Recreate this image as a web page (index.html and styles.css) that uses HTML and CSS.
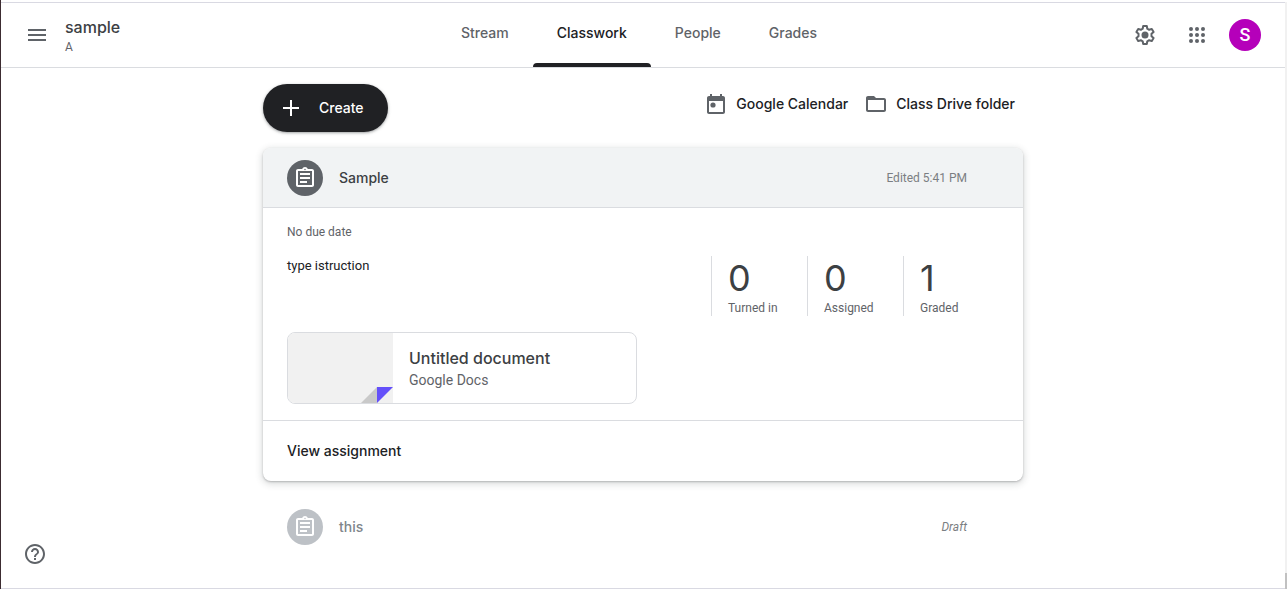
FILE: index.html
```
<!DOCTYPE html>
<html lang="en">
<head>
<meta charset="utf-8">
<meta name="viewport" content="width=device-width, initial-scale=1">
<title>Classwork for sample A</title>
<link rel="stylesheet" href="styles.css">
</head>
<body>
<svg class="defs" aria-hidden="true">
  <symbol id="assignment" viewBox="0 0 24 24">
    <path d="M7 15h7v2H7zm0-4h10v2H7zm0-4h10v2H7zm12-4h-4.180C14.400 1.840 13.300 1 12 1c-1.300 0-2.400.84-2.820 2H5c-1.100 0-2 .9-2 2v14c0 1.100.9 2 2 2h14c1.100 0 2-.9 2-2V5c0-1.100-.9-2-2-2zm-7-.25c.41 0 .75.34.75.75s-.34.75-.75.75-.75-.34-.75-.75.34-.75.75-.75zM19 19H5V5h14v14z"/>
  </symbol>
</svg>
<div class="window">
  <div class="page">
    <header class="topbar">
      <div class="brand">
        <button class="icon-button" type="button" aria-label="Main menu">
          <svg class="icon" viewBox="0 0 24 24"><path d="M3 18h18v-2H3v2zm0-5h18v-2H3v2zm0-7v2h18V6H3z"/></svg>
        </button>
        <a class="class-link" href="#">
          <span class="class-name">sample</span>
          <span class="class-section">A</span>
        </a>
      </div>
      <nav class="tabs" aria-label="Class">
        <a class="tab" href="#">Stream</a>
        <a class="tab tab-active" href="#" aria-current="page">Classwork</a>
        <a class="tab" href="#">People</a>
        <a class="tab" href="#">Grades</a>
      </nav>
      <div class="actions">
        <button class="icon-button" type="button" aria-label="Class settings">
          <svg class="icon" viewBox="0 0 24 24">
            <path fill="none" stroke="currentColor" stroke-width="2" stroke-linejoin="round" d="M10.200 3h3.600l.5 2.700 1.900 1.100 2.600-.9 1.800 3.100-2.100 1.800v2.400l2.100 1.800-1.800 3.100-2.600-.9-1.900 1.100-.5 2.700h-3.600l-.5-2.700-1.900-1.100-2.600.9L3.400 15l2.100-1.800v-2.400L3.400 9l1.800-3.100 2.600.9 1.900-1.100z"/>
            <circle cx="12" cy="12" r="3.500"/>
          </svg>
        </button>
        <button class="icon-button" type="button" aria-label="Google apps">
          <svg class="icon" viewBox="0 0 24 24">
            <circle cx="6" cy="6" r="2"/><circle cx="12" cy="6" r="2"/><circle cx="18" cy="6" r="2"/>
            <circle cx="6" cy="12" r="2"/><circle cx="12" cy="12" r="2"/><circle cx="18" cy="12" r="2"/>
            <circle cx="6" cy="18" r="2"/><circle cx="12" cy="18" r="2"/><circle cx="18" cy="18" r="2"/>
          </svg>
        </button>
        <button class="avatar" type="button" aria-label="Google Account: S">S</button>
      </div>
    </header>

    <main class="content">
      <div class="toolbar">
        <button class="create" type="button">
          <svg class="icon" viewBox="0 0 24 24"><path d="M20 13h-7v7h-2v-7H4v-2h7V4h2v7h7v2z"/></svg>
          Create
        </button>
        <div class="links">
          <a class="link" href="#">
            <svg class="icon link-icon" viewBox="0 0 24 24"><path d="M19 4h-1V2h-2v2H8V2H6v2H5c-1.110 0-1.990.9-1.990 2L3 20c0 1.100.89 2 2 2h14c1.100 0 2-.9 2-2V6c0-1.100-.9-2-2-2zm0 16H5V9h14v11z"/><circle cx="9" cy="13" r="2.600"/></svg>
            Google Calendar
          </a>
          <a class="link" href="#">
            <svg class="icon link-icon" viewBox="0 0 24 24"><path d="M20 6h-8l-2-2H4c-1.100 0-1.990.9-1.990 2L2 18c0 1.100.9 2 2 2h16c1.100 0 2-.9 2-2V8c0-1.100-.9-2-2-2zm0 12H4V8h16v10z"/></svg>
            Class Drive folder
          </a>
        </div>
      </div>

      <article class="card">
        <header class="row card-head">
          <span class="badge"><svg class="icon"><use href="#assignment"/></svg></span>
          <h2 class="row-title">Sample</h2>
          <span class="row-meta">Edited 5:41 PM</span>
        </header>
        <div class="card-body">
          <p class="due">No due date</p>
          <div class="summary">
            <p class="instruction">type istruction</p>
            <div class="stats">
              <a class="stat" href="#"><span class="stat-number">0</span><span class="stat-label">Turned in</span></a>
              <a class="stat" href="#"><span class="stat-number">0</span><span class="stat-label">Assigned</span></a>
              <a class="stat" href="#"><span class="stat-number">1</span><span class="stat-label">Graded</span></a>
            </div>
          </div>
          <a class="attachment" href="#">
            <span class="thumb">
              <svg class="fold" viewBox="0 0 32 16"><path fill="#c9c9c9" d="M0 16L16 0v16z"/><path fill="#6450fa" d="M16 0h16L16 16z"/></svg>
            </span>
            <span class="attachment-text">
              <span class="attachment-title">Untitled document</span>
              <span class="attachment-type">Google Docs</span>
            </span>
          </a>
        </div>
        <footer class="card-foot"><a class="view-link" href="#">View assignment</a></footer>
      </article>

      <div class="row draft">
        <span class="badge badge-muted"><svg class="icon"><use href="#assignment"/></svg></span>
        <h2 class="row-title">this</h2>
        <span class="row-meta">Draft</span>
      </div>
    </main>

    <button class="help" type="button" aria-label="Help">
      <svg class="icon" viewBox="0 0 24 24"><path d="M11 18h2v-2h-2v2zm1-16C6.480 2 2 6.480 2 12s4.480 10 10 10 10-4.480 10-10S17.520 2 12 2zm0 18c-4.410 0-8-3.590-8-8s3.590-8 8-8 8 3.590 8 8-3.590 8-8 8zm0-14c-2.210 0-4 1.790-4 4h2c0-1.100.9-2 2-2s2 .9 2 2c0 2-3 1.750-3 5h2c0-2.250 3-2.500 3-5 0-2.210-1.790-4-4-4z"/></svg>
    </button>
  </div>
  <div class="scroll-track"><div class="scroll-thumb"></div></div>
</div>
</body>
</html>
```
FILE: styles.css
```
:root {
  --heading: Inter, "Open Sans", sans-serif;
  --body: Roboto, "Liberation Sans", sans-serif;
  --ink: #202124;
  --dark: #3c4043;
  --grey: #5f6368;
  --line: #dadce0;
}

* { box-sizing: border-box; }

body {
  margin: 0;
  font-family: var(--body);
  font-size: 13px;
  line-height: 20px;
  color: var(--ink);
  background: #fff;
}

h2, p { margin: 0; font-weight: 400; }
a { color: inherit; text-decoration: none; }
button { border: 0; padding: 0; background: none; color: inherit; cursor: pointer; }

.defs { display: none; }
.icon { display: block; flex: none; width: 24px; height: 24px; fill: currentColor; }

.window {
  display: flex;
  min-height: 100vh;
  padding-top: 2px;
  border-left: 1px solid #3c2c31;
}

.page {
  position: relative;
  flex: 1;
  min-width: 0;
  border-top: 1px solid #d9d9e2;
  border-bottom: 1px solid #d9d9e2;
}

.scroll-track {
  display: flex;
  flex-direction: column;
  justify-content: flex-end;
  width: 2px;
  background: #f1f1f1;
}
.scroll-thumb { height: 16px; background: #c1c1c1; }

.topbar {
  display: grid;
  grid-template-columns: 1fr auto 1fr;
  height: 65px;
  padding: 0 24px 0 16px;
  border-bottom: 1px solid var(--line);
  color: var(--grey);
}

.brand, .actions { display: flex; align-items: center; }
.brand { gap: 8px; }
.actions { justify-content: flex-end; gap: 12px; }
.icon-button { display: grid; place-items: center; width: 40px; height: 40px; border-radius: 50%; }

.class-link { display: flex; flex-direction: column; }
.class-name { font: 500 16px/24px var(--heading); color: var(--dark); }
.class-section { font-size: 12px; line-height: 16px; }

.tabs { display: flex; }
.tab {
  display: flex;
  align-items: center;
  padding: 0 24px;
  border-bottom: 4px solid transparent;
  font: 500 14px/20px var(--heading);
}
.tab-active { position: relative; color: var(--ink); }
.tab-active::after {
  content: "";
  position: absolute;
  left: 0;
  right: 0;
  bottom: -4px;
  height: 4px;
  border-radius: 4px 4px 0 0;
  background: var(--ink);
}

.avatar {
  width: 32px;
  height: 32px;
  border-radius: 50%;
  background: #b500ba;
  color: #fff;
  font: 500 18px/32px var(--body);
}

.content { max-width: 760px; margin: 0 auto; padding: 16px 0 24px; }

.toolbar { display: flex; justify-content: space-between; align-items: flex-start; margin-bottom: 16px; }
.create {
  display: flex;
  align-items: center;
  gap: 16px;
  height: 48px;
  padding: 0 24px 0 16px;
  border-radius: 24px;
  background: var(--ink);
  box-shadow: 0 1px 2px rgba(60, 64, 67, .3), 0 1px 3px 1px rgba(60, 64, 67, .15);
  color: #fff;
  font: 500 14px/20px var(--heading);
}
.links { display: flex; }
.link {
  display: flex;
  align-items: center;
  gap: 8px;
  height: 40px;
  padding: 0 8px;
  font: 500 14px/20px var(--heading);
}
.link-icon { color: var(--grey); }

.card {
  border-radius: 8px;
  background: #fff;
  box-shadow: 0 1px 2px rgba(60, 64, 67, .3), 0 2px 6px 2px rgba(60, 64, 67, .15);
}

.row { display: flex; align-items: center; gap: 16px; height: 60px; padding: 0 56px 0 24px; }
.card-head { border-bottom: 1px solid var(--line); border-radius: 8px 8px 0 0; background: #f1f3f4; }
.badge {
  display: grid;
  flex: none;
  place-items: center;
  width: 36px;
  height: 36px;
  border-radius: 50%;
  background: var(--grey);
  color: #fff;
}
.badge-muted { background: #bdc1c6; }
.row-title { flex: 1; font: 500 14px/20px var(--heading); color: var(--dark); }
.row-meta { font-size: 12px; line-height: 16px; color: #7b7e82; }

.card-body { padding: 16px 24px; border-bottom: 1px solid var(--line); }
.due { margin-bottom: 16px; font-size: 12px; line-height: 16px; color: var(--grey); }
.summary { display: flex; justify-content: space-between; margin-bottom: 16px; }
.stats { display: flex; }
.stat {
  display: flex;
  flex-direction: column;
  width: 96px;
  padding-left: 16px;
  border-left: 1px solid var(--line);
}
.stat-number { font: 400 36px/44px var(--heading); color: var(--dark); }
.stat-label { font-size: 12px; line-height: 16px; color: var(--grey); }

.attachment {
  display: flex;
  max-width: 350px;
  height: 72px;
  overflow: hidden;
  border: 1px solid var(--line);
  border-radius: 8px;
}
.thumb { display: flex; justify-content: flex-end; align-items: flex-end; width: 105px; background: #f1f1f1; }
.fold { width: 32px; height: 16px; }
.attachment-text { display: flex; flex-direction: column; justify-content: center; padding: 0 16px; }
.attachment-title { font: 500 16px/24px var(--heading); color: var(--dark); }
.attachment-type { font-size: 14px; line-height: 20px; color: var(--grey); }

.card-foot { padding: 20px 24px; }
.view-link { display: block; font: 500 14px/20px var(--heading); }

.draft { margin-top: 16px; }
.draft .row-title { color: #80868b; }
.draft .row-meta { font-style: italic; }

.help { position: absolute; left: 22px; bottom: 22px; color: var(--grey); }
```
